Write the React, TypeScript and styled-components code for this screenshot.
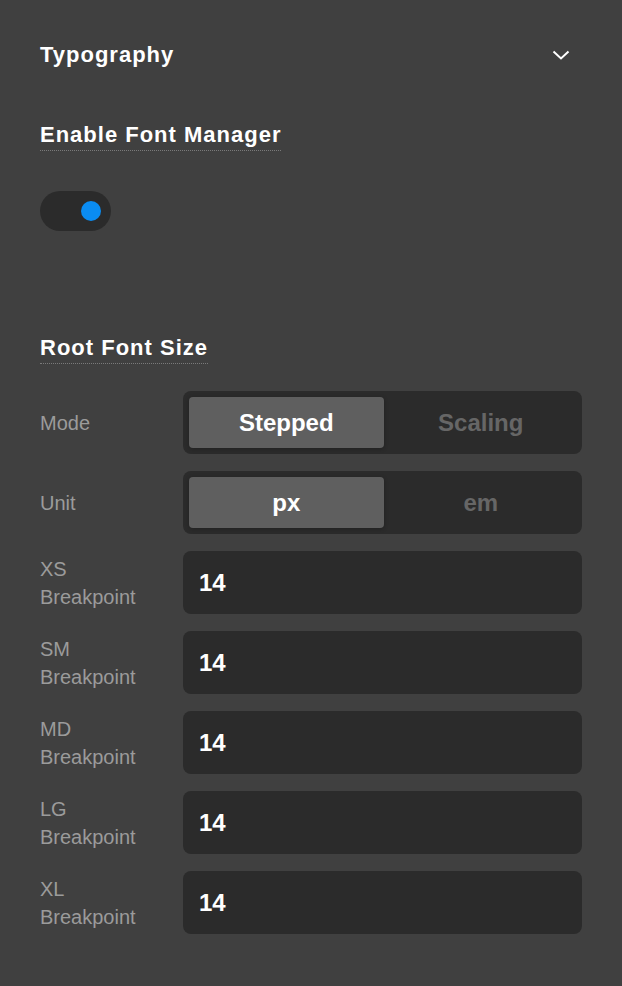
import React, { useState } from 'react'
import styled, { createGlobalStyle } from 'styled-components'

const GlobalStyle = createGlobalStyle`
    html, body {
        margin: 0;
        padding: 0;
        background-color: #404040;
    }
    body {
        font-family: "Liberation Sans", Arial, sans-serif;
    }
`

interface segmentProps {
    options: string[];
    value: string;
    onChange: (v: string) => void;
}

const Segmented: React.FC<segmentProps> = ({ options, value, onChange }) => {
    return (
        <SegmentBox>
            {options.map(opt => (
                <SegmentButton key={opt} active={opt === value} onClick={() => onChange(opt)}>
                    {opt}
                </SegmentButton>
            ))}
        </SegmentBox>
    )
}

const breakpoints = ['XS', 'SM', 'MD', 'LG', 'XL']

const App: React.FC = () => {
    const [enabled, setEnabled] = useState(true)
    const [mode, setMode] = useState('Stepped')
    const [unit, setUnit] = useState('px')

    return (
        <>
            <GlobalStyle />
            <Panel>
                <Header>
                    <Title>Typography</Title>
                    <Chevron width="18" height="10" viewBox="0 0 18 10">
                        <polyline points="1.5,1.5 9,8.5 16.5,1.5" fill="none" stroke="#fff" strokeWidth="2" />
                    </Chevron>
                </Header>

                <SectionLabel>Enable Font Manager</SectionLabel>

                <Toggle on={enabled} onClick={() => setEnabled(!enabled)}>
                    <Knob />
                </Toggle>

                <SectionLabel top={104}>Root Font Size</SectionLabel>

                <Rows>
                    <FieldLabel>Mode</FieldLabel>
                    <Segmented options={['Stepped', 'Scaling']} value={mode} onChange={setMode} />

                    <FieldLabel>Unit</FieldLabel>
                    <Segmented options={['px', 'em']} value={unit} onChange={setUnit} />

                    {breakpoints.map(bp => (
                        <React.Fragment key={bp}>
                            <FieldLabel>{bp}<br />Breakpoint</FieldLabel>
                            <NumberInput defaultValue="14" />
                        </React.Fragment>
                    ))}
                </Rows>
            </Panel>
        </>
    )
}

export default App

const Panel = styled.div`
    width: 622px;
    min-height: 986px;
    box-sizing: border-box;
    padding: 40px 40px 0 40px;
    display: flex;
    flex-direction: column;
    align-items: flex-start;
    color: #fff;
`

const Header = styled.div`
    width: 100%;
    height: 30px;
    display: flex;
    align-items: center;
    justify-content: space-between;
`

const Title = styled.h2`
    margin: 0;
    font-size: 22px;
    font-weight: 700;
    line-height: 30px;
    letter-spacing: 1px;
`

const Chevron = styled.svg`
    margin-right: 12px;
    display: block;
`

const SectionLabel = styled.h3<{ top?: number }>`
    margin: ${props => props.top ?? 52}px 0 0 0;
    display: inline-block;
    font-size: 22px;
    font-weight: 700;
    line-height: 26px;
    letter-spacing: 1px;
    padding-bottom: 2px;
    border-bottom: 1px dotted #7a7a7a;
`

const Toggle = styled.button<{ on: boolean }>`
    margin-top: 40px;
    width: 71px;
    height: 40px;
    border: none;
    border-radius: 20px;
    background-color: #2b2b2b;
    padding: 0 10px;
    display: flex;
    align-items: center;
    justify-content: ${props => (props.on ? 'flex-end' : 'flex-start')};
    cursor: pointer;
`

const Knob = styled.span`
    width: 20px;
    height: 20px;
    border-radius: 50%;
    background-color: #0a8cf2;
`

const Rows = styled.div`
    margin-top: 27px;
    width: 100%;
    display: grid;
    grid-template-columns: 143px 1fr;
    grid-auto-rows: 63px;
    row-gap: 17px;
    align-items: center;
`

const FieldLabel = styled.div`
    font-size: 20px;
    line-height: 28px;
    color: #9b9b9b;
`

const SegmentBox = styled.div`
    height: 63px;
    box-sizing: border-box;
    padding: 6px 4px 6px 6px;
    display: flex;
    border-radius: 8px;
    background-color: #2b2b2b;
`

const SegmentButton = styled.button<{ active: boolean }>`
    flex: 1;
    border: none;
    border-radius: 4px;
    font-family: "Liberation Sans", Arial, sans-serif;
    font-size: 24px;
    font-weight: 700;
    color: ${props => (props.active ? '#fff' : '#666')};
    background-color: ${props => (props.active ? '#5f5f5f' : 'transparent')};
    box-shadow: ${props => (props.active ? '0 1px 4px rgba(0, 0, 0, 0.25)' : 'none')};
    cursor: pointer;
`

const NumberInput = styled.input`
    height: 63px;
    box-sizing: border-box;
    width: 100%;
    border: none;
    outline: none;
    border-radius: 8px;
    background-color: #2b2b2b;
    padding: 0 16px;
    font-family: "Liberation Sans", Arial, sans-serif;
    font-size: 24px;
    font-weight: 700;
    color: #fff;
`
